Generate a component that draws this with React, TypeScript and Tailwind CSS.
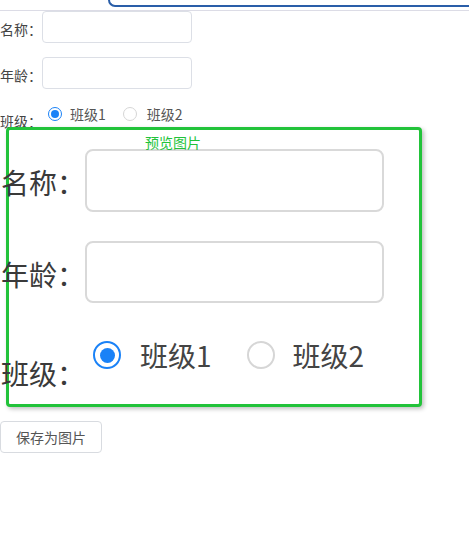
import React from "react";

function Radio({ checked, big }: { checked: boolean; big?: boolean }) {
  if (big) {
    return (
      <span
        className={
          "flex items-center justify-center w-[28px] h-[28px] rounded-full bg-white " +
          (checked ? "border-2 border-[#1a82f7]" : "border-2 border-[#d6d6d6]")
        }
      >
        {checked && <span className="w-[15px] h-[15px] rounded-full bg-[#1a82f7]" />}
      </span>
    );
  }
  return (
    <span
      className={
        "flex items-center justify-center w-[14px] h-[14px] rounded-full bg-white " +
        (checked ? "border border-[#1a82f7]" : "border border-[#d6d6d6]")
      }
    >
      {checked && <span className="w-[8px] h-[8px] rounded-full bg-[#1a82f7]" />}
    </span>
  );
}

function SmallForm() {
  return (
    <div className="text-[14px] leading-[20px] text-[#444]">
      <div className="flex items-center h-[32px]">
        <div className="w-[42px] pt-[3px] whitespace-nowrap">名称：</div>
        <div className="w-[150px] h-[32px] border border-[#dcdfe6] rounded-[4px] bg-white" />
      </div>
      <div className="flex items-center h-[32px] mt-[14px]">
        <div className="w-[42px] pt-[3px] whitespace-nowrap">年龄：</div>
        <div className="w-[150px] h-[32px] border border-[#dcdfe6] rounded-[4px] bg-white" />
      </div>
      <div className="flex items-start h-[25px] mt-[13px]">
        <div className="w-[42px] mt-[9px] whitespace-nowrap">班级：</div>
        <div className="flex items-center h-[24px] ml-[6px] text-[#555]">
          <Radio checked />
          <span className="ml-[8px]">班级1</span>
          <span className="ml-[17px]">
            <Radio checked={false} />
          </span>
          <span className="ml-[10px]">班级2</span>
        </div>
      </div>
    </div>
  );
}

function BigForm() {
  return (
    <div className="-ml-[8px] text-[28px] leading-[40px] text-[#3a3a3a]">
      <div className="flex items-center h-[63px] mt-[19px]">
        <div className="w-[84px] pt-[3px] whitespace-nowrap">名称：</div>
        <div className="w-[299px] h-[63px] border-2 border-[#d9d9d9] rounded-[8px] bg-white" />
      </div>
      <div className="flex items-center h-[62px] mt-[29px]">
        <div className="w-[84px] pt-[3px] whitespace-nowrap">年龄：</div>
        <div className="w-[299px] h-[62px] border-2 border-[#d9d9d9] rounded-[8px] bg-white" />
      </div>
      <div className="flex items-start h-[52px] mt-[26px]">
        <div className="w-[84px] mt-[24px] whitespace-nowrap">班级：</div>
        <div className="flex items-center h-[52px] ml-[8px] text-[#444]">
          <Radio checked big />
          <span className="ml-[19px]">班级1</span>
          <span className="ml-[35px]">
            <Radio checked={false} big />
          </span>
          <span className="ml-[18px]">班级2</span>
        </div>
      </div>
    </div>
  );
}

export default function App() {
  return (
    <div
      className="w-[469px] h-[541px] bg-white overflow-hidden"
      style={{ fontFamily: '"Noto Sans CJK SC", "Noto Sans", sans-serif' }}
    >
      <div className="h-[11px] border-b border-[#dcdce6]">
        <div className="ml-[108px] h-[7px] border-l-2 border-b-2 border-[#2a5ea8] rounded-bl-[14px]" />
      </div>
      <SmallForm />
      <div className="relative ml-[6px] w-[416px] h-[280px] border-[3px] border-[#22c33a] rounded-[4px] bg-white shadow-[2px_2px_4px_rgba(0,0,0,0.25)]">
        <BigForm />
        <div className="absolute left-[136px] top-[2px] text-[14px] leading-[20px] text-[#22c33a]">
          预览图片
        </div>
      </div>
      <button className="mt-[14px] w-[102px] h-[32px] border border-[#d8dbe0] rounded-[4px] bg-white text-[14px] text-[#555] flex items-center justify-center">
        保存为图片
      </button>
    </div>
  );
}
